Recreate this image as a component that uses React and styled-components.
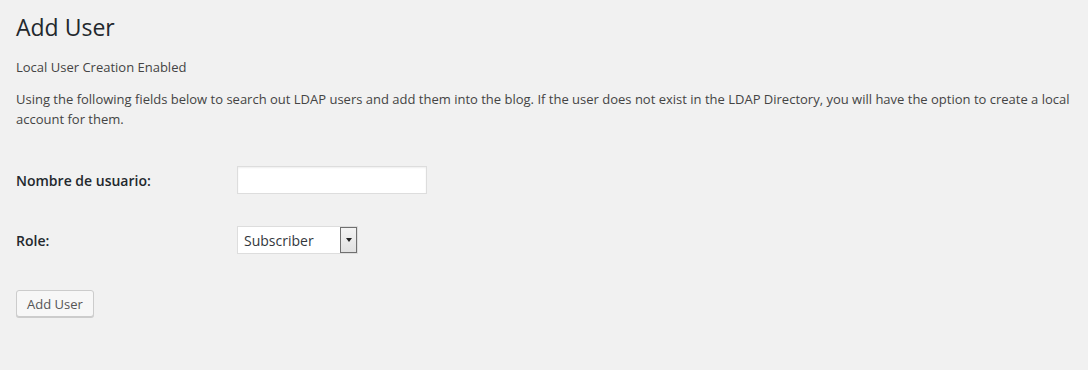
import React from 'react';
import styled, { createGlobalStyle } from 'styled-components';

const GlobalStyle = createGlobalStyle`
  html, body {
    margin: 0;
    padding: 0;
    background: #f1f1f1;
  }
  body {
    font-family: 'Open Sans', 'Liberation Sans', sans-serif;
    font-size: 13px;
    color: #444;
  }
`;

const Wrap = styled.div`
  height: 370px;
  padding: 13px 16px 0;
  box-sizing: border-box;
`;

const Title = styled.h1`
  font-size: 23px;
  font-weight: 400;
  line-height: 29px;
  color: #23282d;
  margin: 0;
`;

const Text = styled.p`
  margin: ${p => p.top || 0}px 0 0;
  font-size: 13px;
  line-height: 20px;
`;

const Form = styled.div`
  display: grid;
  grid-template-columns: 221px auto;
  align-items: center;
  row-gap: 32px;
  margin-top: 37px;
`;

const Label = styled.label`
  font-weight: 600;
  font-size: 14px;
  color: #23282d;
`;

const Input = styled.input`
  width: 190px;
  height: 28px;
  box-sizing: border-box;
  border: 1px solid #ddd;
  box-shadow: inset 0 1px 2px rgba(0, 0, 0, 0.07);
  background: #fff;
  outline: none;
  font: inherit;
`;

const Select = styled.div`
  display: flex;
  align-items: center;
  width: 121px;
  height: 28px;
  box-sizing: border-box;
  border: 1px solid #ddd;
  background: #fff;
  padding: 0 0 0 6px;
  font-size: 14px;
  color: #32373c;
`;

const SelectValue = styled.span`
  flex: 1;
`;

const Arrow = styled.span`
  width: 17px;
  height: 26px;
  box-sizing: border-box;
  border: 1px solid #707070;
  background: linear-gradient(#f4f4f4, #e1e1e1);
  display: flex;
  align-items: center;
  justify-content: center;

  &::after {
    content: '';
    border-left: 3px solid transparent;
    border-right: 3px solid transparent;
    border-top: 4px solid #222;
  }
`;

const Button = styled.button`
  display: block;
  margin-top: 36px;
  height: 27px;
  padding: 0 10px;
  font-family: inherit;
  font-size: 13px;
  color: #555;
  background: #f7f7f7;
  border: 1px solid #ccc;
  border-radius: 3px;
  box-shadow: 0 1px 0 #ccc;
`;

export default function App() {
  return (
    <>
      <GlobalStyle />
      <Wrap>
        <Title>Add User</Title>
        <Text top={15}>Local User Creation Enabled</Text>
        <Text top={12}>
          Using the following fields below to search out LDAP users and add them into the blog. If the user does not exist in the LDAP Directory, you will have the option to create a local account for them.
        </Text>
        <Form>
          <Label>Nombre de usuario:</Label>
          <Input type="text" />
          <Label>Role:</Label>
          <Select>
            <SelectValue>Subscriber</SelectValue>
            <Arrow />
          </Select>
        </Form>
        <Button>Add User</Button>
      </Wrap>
    </>
  );
}
